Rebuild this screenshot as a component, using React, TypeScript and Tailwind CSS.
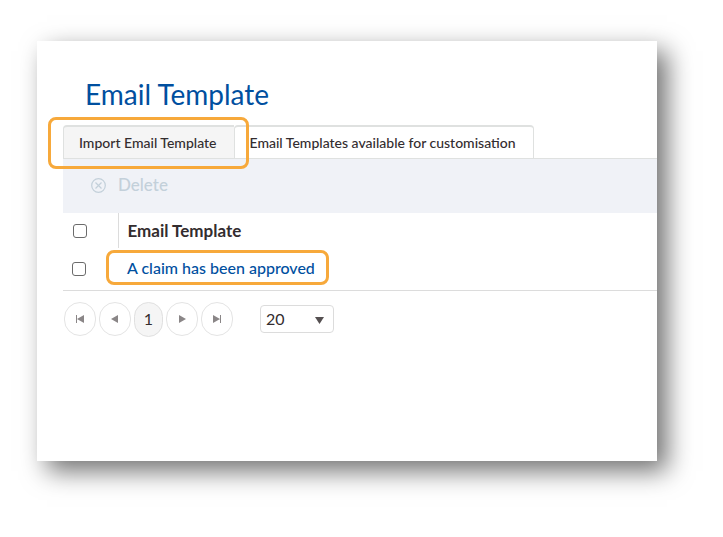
import type { ReactNode } from 'react'

const templates = [{ id: 1, name: 'A claim has been approved' }]

function Highlight({ className }: { className: string }) {
  return (
    <span
      aria-hidden="true"
      className={`pointer-events-none absolute z-10 rounded-lg border-3 border-[#f7a93b] ${className}`}
    />
  )
}

function PageButton({ label, children }: { label: string; children: ReactNode }) {
  return (
    <button
      type="button"
      aria-label={label}
      className="flex h-[34px] w-8 items-center justify-center rounded-full border border-[#e4e4e4] bg-white text-[#8a8687]"
    >
      <svg width="10" height="10" viewBox="0 0 10 10" fill="currentColor">
        {children}
      </svg>
    </button>
  )
}

const checkbox =
  'block size-[14px] appearance-none rounded-[3px] border border-[#6b6b6b] bg-white checked:bg-[#004f9f]'

export default function App() {
  return (
    <div className="min-h-screen bg-white pt-[41px] pr-[66px] pb-[76px] pl-[37px] font-['Lato',sans-serif] text-[#332d2f]">
      <main className="min-h-[420px] bg-white pt-[35px] pl-[26px] shadow-[10px_10px_24px_rgba(0,0,0,0.56)]">
        <h1 className="pl-[22px] text-[28px] leading-9 text-[#004f9f]">Email Template</h1>

        {/* Tabs */}
        <div role="tablist" className="mt-[13px] flex text-sm">
          <div className="relative">
            <button
              type="button"
              role="tab"
              aria-selected="true"
              className="h-[33px] rounded-tl-sm border-t-2 border-l border-[#dfe1e0] bg-[#f5f5f5] pr-[17px] pl-[15px] font-medium whitespace-nowrap"
            >
              Import Email Template
            </button>
            <Highlight className="-top-2 -right-[15px] -bottom-[11px] -left-[15px]" />
          </div>
          <button
            type="button"
            role="tab"
            aria-selected="false"
            className="h-[33px] rounded-t-sm border-x border-t-2 border-[#dfe1e0] bg-white pr-[17px] pl-[15px] font-medium whitespace-nowrap"
          >
            Email Templates available for customisation
          </button>
        </div>

        {/* Toolbar */}
        <div className="h-[55px] border-t border-[#dfe1e0] bg-[#f0f2f7] pt-[14px] pl-7">
          <button
            type="button"
            disabled
            className="flex items-center gap-3 text-[17px] leading-6 font-medium text-[#c3d0da]"
          >
            <svg width="15" height="15" viewBox="0 0 15 15" fill="none" stroke="currentColor" strokeWidth="1.2">
              <circle cx="7.5" cy="7.5" r="6.8" />
              <path d="M4.5 4.5l6 6M10.5 4.5l-6 6" />
            </svg>
            Delete
          </button>
        </div>

        <table className="w-full border-collapse text-left">
          <thead>
            <tr className="h-[35px]">
              <th className="w-[55px] pl-[10px]">
                <input type="checkbox" aria-label="Select all" className={checkbox} />
              </th>
              <th className="border-l border-[#dcdcdc] pl-[9px] text-[17px] font-bold">Email Template</th>
            </tr>
          </thead>
          <tbody>
            {templates.map((t) => (
              <tr key={t.id} className="h-[42px] border-b border-[#dcdcdc]">
                <td className="pl-[9px]">
                  <input type="checkbox" aria-label={t.name} className={checkbox} />
                </td>
                <td className="pb-[2px] pl-[9px]">
                  <a href="#" className="relative font-medium text-[#004f9f]">
                    {t.name}
                    <Highlight className="-top-2 -right-[14px] -bottom-2 -left-[21px]" />
                  </a>
                </td>
              </tr>
            ))}
          </tbody>
        </table>

        {/* Pager */}
        <nav aria-label="Pagination" className="mt-[11px] flex items-center gap-[3px] pl-px">
          <PageButton label="First page">
            <path d="M1 1h1v8H1zM9 1v8L2 5z" />
          </PageButton>
          <PageButton label="Previous page">
            <path d="M8 1v8L1 5z" />
          </PageButton>
          <button
            type="button"
            aria-current="page"
            className="h-[35px] w-[29px] rounded-full border border-[#e0e0e0] bg-[#f5f5f5] text-base"
          >
            1
          </button>
          <PageButton label="Next page">
            <path d="M2 1v8l7-4z" />
          </PageButton>
          <PageButton label="Last page">
            <path d="M1 1v8l7-4zM8 1h1v8H8z" />
          </PageButton>
          <div className="relative ml-6">
            <select
              aria-label="Items per page"
              defaultValue="20"
              className="block h-7 w-[74px] appearance-none rounded-sm border border-[#dcdcdc] bg-white pl-[5px] text-base leading-6"
            >
              <option>10</option>
              <option>20</option>
              <option>50</option>
            </select>
            <svg
              className="pointer-events-none absolute top-3 right-[10px] text-[#555051]"
              width="9"
              height="7"
              viewBox="0 0 9 7"
              fill="currentColor"
            >
              <path d="M0 0h9L4.5 7z" />
            </svg>
          </div>
        </nav>
      </main>
    </div>
  )
}
